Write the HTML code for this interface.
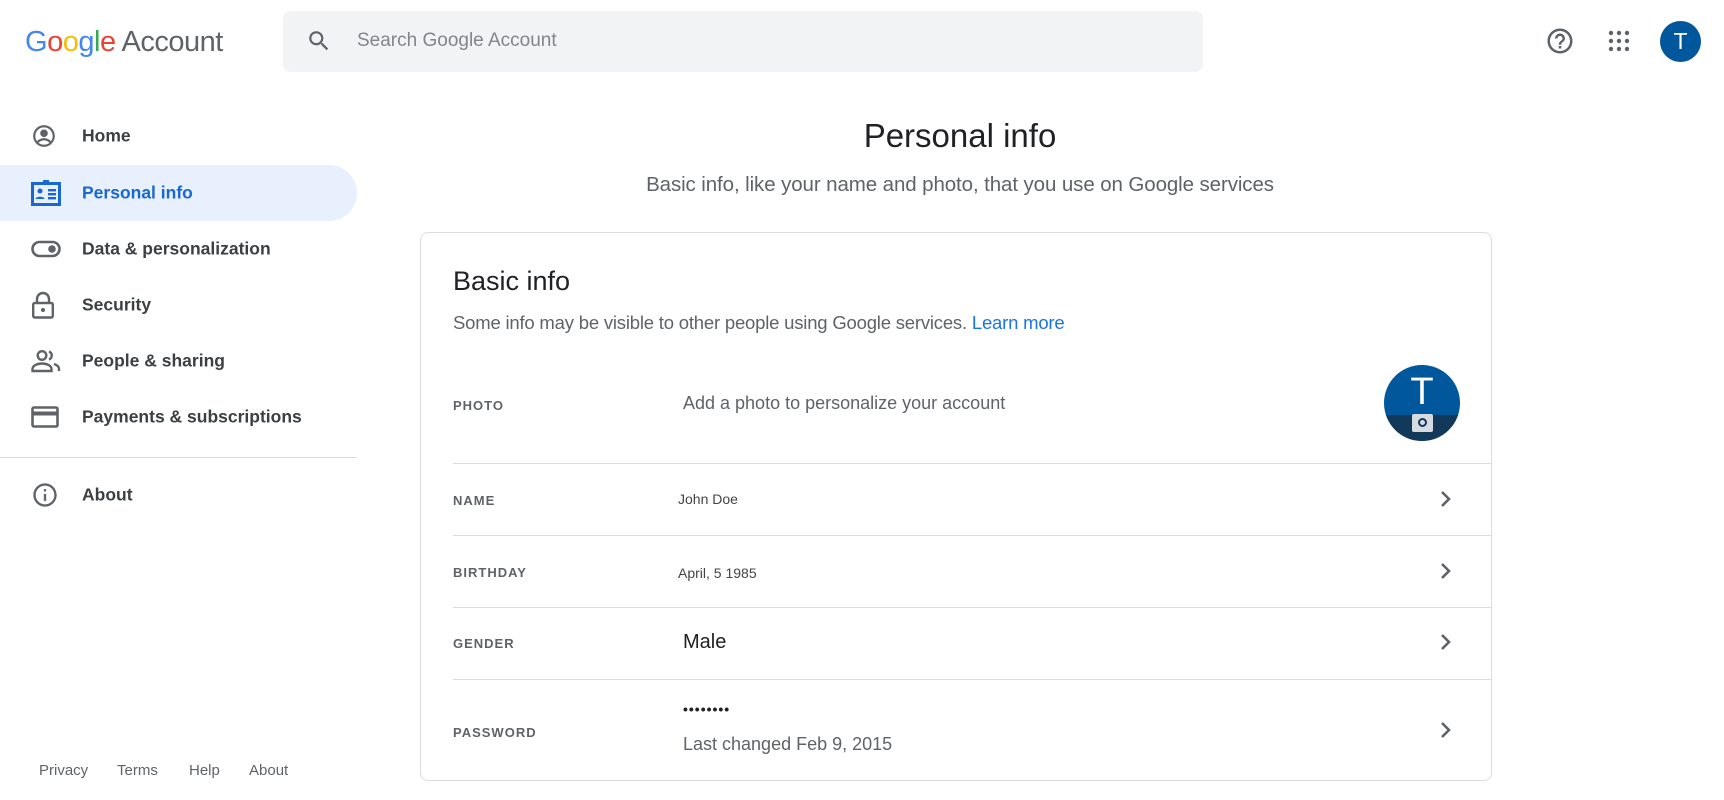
<!DOCTYPE html>
<html><head><meta charset="utf-8"><style>
*{box-sizing:border-box;margin:0;padding:0}
body{width:1724px;height:800px;overflow:hidden;background:#fff;font-family:"Liberation Sans",Arial,sans-serif;position:relative;color:#202124}
.abs{position:absolute}
.logo{left:25px;top:26px;font-size:29px;letter-spacing:-0.5px;white-space:nowrap}
.search{left:283px;top:11px;width:920px;height:61px;background:#f1f3f4;border-radius:8px}
.search span{position:absolute;left:74px;top:19px;font-size:19px;color:#80868b}
.nav{left:0;width:357px;height:56px;}
.nav .t{position:absolute;left:82px;font-size:17.5px;font-weight:bold;color:#3c4043;top:50%;transform:translateY(-50%)}
.nav svg{position:absolute;left:31px;top:50%;transform:translateY(-50%)}
.sel{background:#e8f0fe;border-radius:0 28px 28px 0}
.sel .t{color:#1967d2}
.foot{top:762px;font-size:15px;color:#5f6368}
.lbl{left:453px;font-size:13px;font-weight:bold;letter-spacing:1px;color:#5f6368}
.sep{left:453px;width:1038px;height:1px;background:#dadce0}
.chev{left:1437px}
</style></head><body>
<div class="abs logo"><span style="color:#4285f4">G</span><span style="color:#ea4335">o</span><span style="color:#fbbc05">o</span><span style="color:#4285f4">g</span><span style="color:#34a853">l</span><span style="color:#ea4335">e</span><span style="color:#5f6368"> Account</span></div>
<div class="abs search"><svg style="position:absolute;left:23px;top:17px" width="26" height="26" viewBox="0 0 24 24"><path fill="#5f6368" d="M15.5 14h-.79l-.28-.27A6.470 6.470 0 0 0 16 9.5 6.5 6.5 0 1 0 9.5 16c1.61 0 3.090-.59 4.230-1.57l.27.28v.79l5 4.990L20.490 19l-4.990-5zm-6 0C7.010 14 5 11.990 5 9.5S7.010 5 9.5 5 14 7.010 14 9.5 11.990 14 9.5 14z"/></svg><span>Search Google Account</span></div>
<svg class="abs" style="left:1545px;top:26px" width="30" height="30" viewBox="0 0 24 24"><path fill="#5f6368" d="M11 18h2v-2h-2v2zm1-16C6.48 2 2 6.48 2 12s4.48 10 10 10 10-4.48 10-10S17.52 2 12 2zm0 18c-4.41 0-8-3.59-8-8s3.59-8 8-8 8 3.59 8 8-3.59 8-8 8zm0-14c-2.21 0-4 1.79-4 4h2c0-1.1.9-2 2-2s2 .9 2 2c0 2-3 1.75-3 5h2c0-2.25 3-2.5 3-5 0-2.21-1.79-4-4-4z"/></svg>
<svg class="abs" style="left:1607px;top:29px" width="24" height="24" viewBox="0 0 24 24" fill="#5f6368"><circle cx="4" cy="4" r="2.2"/><circle cx="12" cy="4" r="2.2"/><circle cx="20" cy="4" r="2.2"/><circle cx="4" cy="12" r="2.2"/><circle cx="12" cy="12" r="2.2"/><circle cx="20" cy="12" r="2.2"/><circle cx="4" cy="20" r="2.2"/><circle cx="12" cy="20" r="2.2"/><circle cx="20" cy="20" r="2.2"/></svg>
<div class="abs" style="left:1660px;top:21px;width:41px;height:41px;border-radius:50%;background:#01579b;color:#fff;font-size:23px;text-align:center;line-height:41px">T</div>

<div class="abs nav" style="top:108px"><svg width="26" height="26" viewBox="0 0 24 24"><path fill="#5f6368" d="M12 2C6.48 2 2 6.48 2 12s4.48 10 10 10 10-4.48 10-10S17.52 2 12 2zm0 18c-1.9 0-3.7-.66-5.1-1.8C8.3 16.9 10.1 16 12 16s3.7.9 5.1 2.2C15.7 19.34 13.9 20 12 20zm6.5-3.2C16.8 15.1 14.5 14 12 14s-4.8 1.1-6.5 2.8A7.96 7.96 0 0 1 4 12c0-4.41 3.59-8 8-8s8 3.59 8 8c0 1.79-.6 3.44-1.5 4.8zM12 6c-1.93 0-3.5 1.57-3.5 3.5S10.07 13 12 13s3.5-1.57 3.5-3.5S13.93 6 12 6z"/></svg><span class="t">Home</span></div>
<div class="abs nav sel" style="top:165px"><svg width="30" height="26" viewBox="0 0 30 26"><rect x="1.5" y="3.5" width="27" height="21" fill="none" stroke="#1967d2" stroke-width="3"/><rect x="12" y="0" width="6" height="5" fill="#1967d2"/><circle cx="9" cy="11" r="2.5" fill="#1967d2"/><path d="M4.5 19c0-3 9-3 9 0z" fill="#1967d2"/><rect x="17" y="9" width="8" height="2.4" fill="#1967d2"/><rect x="17" y="13" width="8" height="2.4" fill="#1967d2"/><rect x="17" y="17" width="8" height="2.4" fill="#1967d2"/></svg><span class="t">Personal info</span></div>
<div class="abs nav" style="top:221px"><svg width="30" height="18" viewBox="0 0 30 18"><rect x="1.5" y="2" width="27" height="14" rx="7" fill="none" stroke="#5f6368" stroke-width="2.6"/><circle cx="21" cy="9" r="3.8" fill="#5f6368"/></svg><span class="t">Data &amp; personalization</span></div>
<div class="abs nav" style="top:277px"><svg width="24" height="28" viewBox="0 0 24 28"><path d="M6 12V8a6 6 0 0 1 12 0v4" fill="none" stroke="#5f6368" stroke-width="2.4"/><rect x="2.2" y="12" width="19.6" height="14.5" rx="1.5" fill="none" stroke="#5f6368" stroke-width="2.4"/><circle cx="12" cy="19" r="2" fill="#5f6368"/></svg><span class="t">Security</span></div>
<div class="abs nav" style="top:333px"><svg width="30" height="24" viewBox="0 0 30 24"><circle cx="11" cy="6.5" r="4.3" fill="none" stroke="#5f6368" stroke-width="2.4"/><path d="M1.5 22v-2c0-3.5 5-5.5 9.5-5.5s9.5 2 9.5 5.5v2z" fill="none" stroke="#5f6368" stroke-width="2.4"/><path d="M18 2.5a4.3 4.3 0 0 1 0 8" fill="none" stroke="#5f6368" stroke-width="2.4"/><path d="M23 15c3 1 5 2.5 5 5v2" fill="none" stroke="#5f6368" stroke-width="2.4"/></svg><span class="t">People &amp; sharing</span></div>
<div class="abs nav" style="top:389px"><svg width="28" height="22" viewBox="0 0 28 22"><rect x="1.5" y="1.5" width="25" height="19" rx="1.5" fill="none" stroke="#5f6368" stroke-width="2.6"/><rect x="1.5" y="5.5" width="25" height="4" fill="#5f6368"/></svg><span class="t">Payments &amp; subscriptions</span></div>
<div class="abs" style="left:0;top:457px;width:357px;height:1px;background:#dadce0"></div>
<div class="abs nav" style="top:467px"><svg width="28" height="28" viewBox="0 0 24 24"><path fill="#5f6368" d="M11 7h2v2h-2zm0 4h2v6h-2zm1-9C6.48 2 2 6.48 2 12s4.48 10 10 10 10-4.48 10-10S17.52 2 12 2zm0 18c-4.41 0-8-3.59-8-8s3.59-8 8-8 8 3.59 8 8-3.59 8-8 8z"/></svg><span class="t">About</span></div>
<div class="abs foot" style="left:39px">Privacy</div>
<div class="abs foot" style="left:117px">Terms</div>
<div class="abs foot" style="left:189px">Help</div>
<div class="abs foot" style="left:249px">About</div>

<div class="abs" style="left:600px;width:720px;top:117px;text-align:center;font-size:33px;color:#202124">Personal info</div>
<div class="abs" style="left:510px;width:900px;top:173px;text-align:center;font-size:20.5px;color:#5f6368;letter-spacing:-0.1px">Basic info, like your name and photo, that you use on Google services</div>

<div class="abs" style="left:420px;top:232px;width:1072px;height:549px;border:1px solid #dadce0;border-radius:8px"></div>
<div class="abs" style="left:453px;top:266px;font-size:27px;color:#202124">Basic info</div>
<div class="abs" style="left:453px;top:312px;font-size:18.5px;color:#5f6368;letter-spacing:-0.2px">Some info may be visible to other people using Google services. <span style="color:#1a73e8">Learn more</span></div>

<div class="abs lbl" style="top:398px">PHOTO</div>
<div class="abs" style="left:683px;top:393px;font-size:18px;color:#5f6368">Add a photo to personalize your account</div>
<div class="abs" style="left:1384px;top:365px;width:76px;height:76px;border-radius:50%;overflow:hidden;background:#01579b">
<div style="position:absolute;left:0;top:50px;width:76px;height:26px;background:#12385a"></div>
<div style="position:absolute;left:0;width:76px;top:6px;text-align:center;color:#fff;font-size:38px">T</div>
<div style="position:absolute;left:28px;top:49px;width:21px;height:18px;background:#d5dbe1;border-radius:2px"></div>
<div style="position:absolute;left:34px;top:53px;width:9px;height:9px;border:2px solid #12385a;border-radius:50%"></div>
</div>
<div class="abs sep" style="top:463px"></div>

<div class="abs lbl" style="top:493px">NAME</div>
<div class="abs" style="left:678px;top:491px;font-size:14px;color:#444">John Doe</div>
<div class="abs sep" style="top:535px"></div>

<div class="abs lbl" style="top:565px">BIRTHDAY</div>
<div class="abs" style="left:678px;top:565px;font-size:14px;color:#444">April, 5 1985</div>
<div class="abs sep" style="top:607px"></div>

<div class="abs lbl" style="top:636px">GENDER</div>
<div class="abs" style="left:683px;top:631px;font-size:20px;color:#202124">Male</div>
<div class="abs sep" style="top:679px"></div>

<div class="abs lbl" style="top:725px">PASSWORD</div>
<div class="abs" style="left:683px;top:701px;font-size:14px;color:#202124;letter-spacing:1px;font-weight:bold">••••••••</div>
<div class="abs" style="left:683px;top:734px;font-size:18px;color:#5f6368">Last changed Feb 9, 2015</div>

<svg class="abs chev" style="top:488px" width="16" height="22" viewBox="0 0 16 22"><path d="M5 4l7 7-7 7" fill="none" stroke="#5f6368" stroke-width="2.6"/></svg>
<svg class="abs chev" style="top:560px" width="16" height="22" viewBox="0 0 16 22"><path d="M5 4l7 7-7 7" fill="none" stroke="#5f6368" stroke-width="2.6"/></svg>
<svg class="abs chev" style="top:631px" width="16" height="22" viewBox="0 0 16 22"><path d="M5 4l7 7-7 7" fill="none" stroke="#5f6368" stroke-width="2.6"/></svg>
<svg class="abs chev" style="top:719px" width="16" height="22" viewBox="0 0 16 22"><path d="M5 4l7 7-7 7" fill="none" stroke="#5f6368" stroke-width="2.6"/></svg>
</body></html>
